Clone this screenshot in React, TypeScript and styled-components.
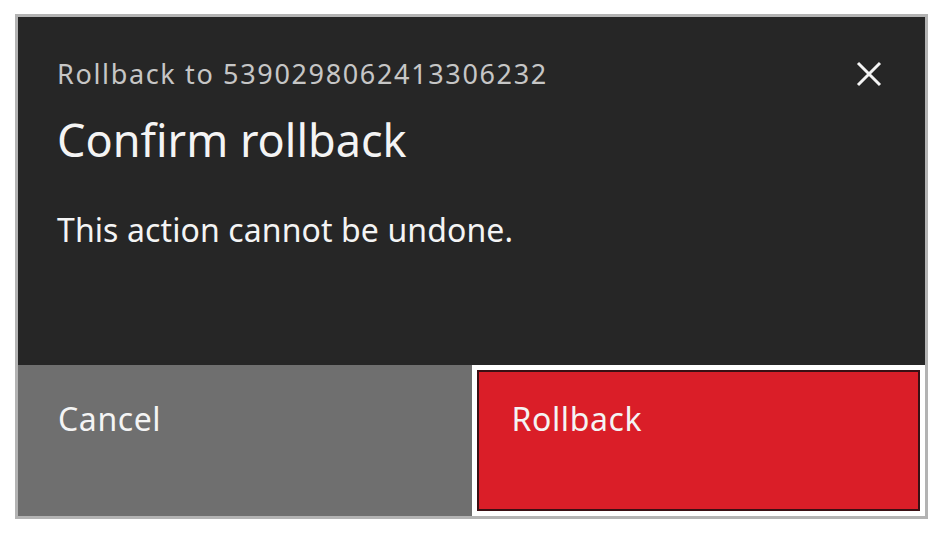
import React from "react";
import styled, { createGlobalStyle } from "styled-components";

const Global = createGlobalStyle`
  html, body { margin: 0; padding: 0; background: #ffffff; }
  body { font-family: "Noto Sans", "Liberation Sans", sans-serif; }
`;

const Page = styled.div`
  padding: 14px 0 0 15px;
`;

const Dialog = styled.div`
  box-sizing: border-box;
  width: 913px;
  height: 505px;
  border: 3px solid #b3b3b3;
  background: #262626;
  display: flex;
  flex-direction: column;
`;

const Content = styled.div`
  flex: 1;
  padding: 40px 42px 0 39px;
  display: flex;
  flex-direction: column;
`;

const HeaderRow = styled.div`
  display: flex;
  align-items: center;
  justify-content: space-between;
`;

const Label = styled.div`
  font-size: 27px;
  line-height: 34px;
  color: #c6c6c6;
  letter-spacing: 1.65px;
`;

const CloseButton = styled.button`
  border: none;
  background: transparent;
  padding: 0;
  width: 28px;
  height: 28px;
  display: flex;
  align-items: center;
  justify-content: center;
  cursor: pointer;
`;

const Heading = styled.h2`
  margin: 21px 0 0 0;
  font-size: 45px;
  line-height: 56px;
  font-weight: 400;
  color: #f4f4f4;
`;

const Body = styled.p`
  margin: 40px 0 0 0;
  font-size: 32px;
  line-height: 44px;
  color: #f4f4f4;
  letter-spacing: 0.1px;
`;

const Footer = styled.div`
  display: grid;
  grid-template-columns: 1fr 1fr;
  height: 151px;
`;

const ActionButton = styled.button<{ $kind: "secondary" | "danger" }>`
  box-sizing: border-box;
  border: none;
  margin: 0;
  text-align: left;
  display: flex;
  align-items: flex-start;
  padding: 32px 0 0 40px;
  font-family: "Noto Sans", "Liberation Sans", sans-serif;
  font-size: 32px;
  line-height: 44px;
  letter-spacing: 0.6px;
  color: #f4f4f4;
  cursor: pointer;
  background: ${(p) => (p.$kind === "danger" ? "#da1e28" : "#6f6f6f")};
  box-shadow: ${(p) =>
    p.$kind === "danger"
      ? "inset 0 0 0 5px #ffffff, inset 0 0 0 7px #3a1014"
      : "none"};
`;

export default function App() {
  return (
    <>
      <Global />
      <Page>
        <Dialog>
          <Content>
            <HeaderRow>
              <Label>Rollback to 5390298062413306232</Label>
              <CloseButton aria-label="Close">
                <svg width="28" height="28" viewBox="0 0 28 28">
                  <path
                    d="M3 3 L25 25 M25 3 L3 25"
                    stroke="#f4f4f4"
                    strokeWidth="3"
                    strokeLinecap="butt"
                  />
                </svg>
              </CloseButton>
            </HeaderRow>
            <Heading>Confirm rollback</Heading>
            <Body>This action cannot be undone.</Body>
          </Content>
          <Footer>
            <ActionButton $kind="secondary">Cancel</ActionButton>
            <ActionButton $kind="danger">Rollback</ActionButton>
          </Footer>
        </Dialog>
      </Page>
    </>
  );
}
